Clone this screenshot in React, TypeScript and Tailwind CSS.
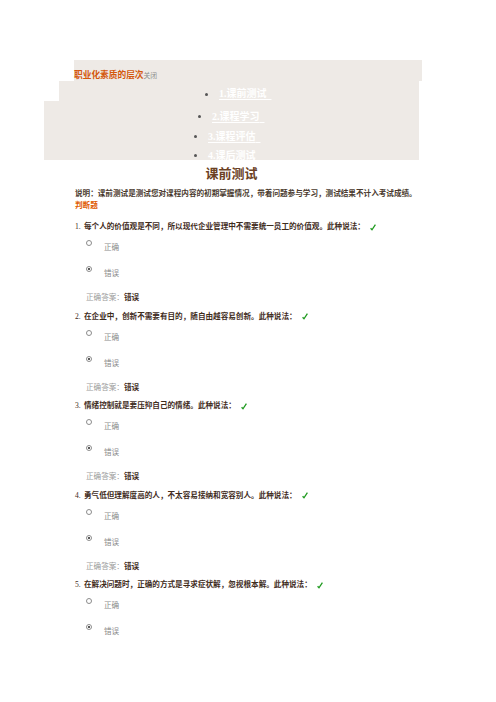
import React from "react";

const CJK = { fontFamily: '"Liberation Serif", "Noto Sans CJK SC", serif' };

function Radio({ checked }: { checked?: boolean }) {
  return (
    <span className="relative block w-[6px] h-[6px] rounded-full border border-[#8c8c8c] bg-white">
      {checked && (
        <span className="absolute left-[1px] top-[1px] w-[2px] h-[2px] rounded-full bg-[#222]" />
      )}
    </span>
  );
}

function Check() {
  return (
    <svg width="6" height="7" viewBox="0 0 6 7" className="block">
      <path d="M0.6 4.2 L2 5.8 L5.4 0.6" fill="none" stroke="#1f9a1f" strokeWidth="1.3" />
    </svg>
  );
}

const questions = [
  "每个人的价值观是不同，所以现代企业管理中不需要统一员工的价值观。此种说法：",
  "在企业中，创新不需要有目的，随自由越容易创新。此种说法：",
  "情绪控制就是要压抑自己的情绪。此种说法：",
  "勇气低但理解度高的人，不太容易接纳和宽容别人。此种说法：",
  "在解决问题时，正确的方式是寻求症状解，忽视根本解。此种说法：",
];

function Question({ n, text, last }: { n: number; text: string; last?: boolean }) {
  return (
    <div className={last ? "h-[60px]" : "h-[89.5px]"}>
      <div className="h-[12px] flex items-center text-[7.6px] leading-[12px] text-[#3f2c1c]">
        <span className="w-[9px]">{n}.</span>
        <span className="font-bold">{text}</span>
        <span className="ml-[5px]">
          <Check />
        </span>
      </div>
      <div className="relative h-[26px]">
        <div className="absolute left-[11px] top-[7px]">
          <Radio />
        </div>
        <div className="absolute left-[29px] top-[10px] text-[7.6px] leading-[10px] text-[#8a8a8a]">正确</div>
      </div>
      <div className="relative h-[26px]">
        <div className="absolute left-[11px] top-[7px]">
          <Radio checked />
        </div>
        <div className="absolute left-[29px] top-[10px] text-[7.6px] leading-[10px] text-[#8a8a8a]">错误</div>
      </div>
      {!last && (
        <div className="mt-[8px] h-[10px] flex items-center text-[7.6px] leading-[10px] pl-[11px]">
          <span className="text-[#9a9a9a] w-[38px]">正确答案：</span>
          <span className="font-bold text-[#3f2c1c]">错误</span>
        </div>
      )}
    </div>
  );
}

function NavItem({ label, ml }: { label: string; ml: string }) {
  return (
    <div className={`flex items-center h-[19.5px] ${ml}`}>
      <span className="w-[3px] h-[3px] rounded-full bg-[#555]" />
      <span className="ml-[11px] text-[10px] leading-[19.5px] font-bold text-white underline underline-offset-2 decoration-white">
        {label}&nbsp;&nbsp;
      </span>
    </div>
  );
}

export default function App() {
  return (
    <div className="w-[496px] h-[702px] bg-white overflow-hidden" style={CJK}>
      <div className="pt-[60px]">
        <div className="ml-[74px] w-[348px] h-[21px] bg-[#eeeae6] pt-[10px]">
          <div className="h-[11px] flex items-center leading-[11px]">
            <span className="text-[8.7px] font-bold text-[#d4570c]">职业化素质的层次</span>
            <span className="text-[6.8px] text-[#8a8a8a]">关闭</span>
          </div>
        </div>
        <div className="ml-[59px] w-[360px] h-[20px] bg-[#eeeae6] pt-[7px]">
          <div className="flex items-center h-[12px] ml-[146px]">
            <span className="w-[3px] h-[3px] rounded-full bg-[#555]" />
            <span className="ml-[11px] text-[10px] leading-[12px] font-bold text-white underline underline-offset-2 decoration-white">
              1.课前测试&nbsp;&nbsp;
            </span>
          </div>
        </div>
        <div className="ml-[44px] w-[375px] h-[59px] bg-[#eeeae6] pt-[6px]">
          <NavItem label="2.课程学习" ml="ml-[154px]" />
          <NavItem label="3.课程评估" ml="ml-[150px]" />
          <NavItem label="4.课后测试" ml="ml-[150px]" />
        </div>
        <div className="ml-[44px] w-[375px] h-[28px] text-center text-[13px] leading-[28px] font-bold text-[#6b4124]">
          课前测试
        </div>
        <div className="ml-[75px]">
          <div className="h-[12px] text-[7.6px] leading-[12px] font-bold text-[#4a3a2e] whitespace-nowrap">
            说明：课前测试是测试您对课程内容的初期掌握情况，带着问题参与学习，测试结果不计入考试成绩。
          </div>
          <div className="h-[11px] text-[7.6px] leading-[11px] font-bold text-[#e05a00]">判断题</div>
          <div className="mt-[10px]">
            {questions.map((q, i) => (
              <Question key={i} n={i + 1} text={q} last={i === questions.length - 1} />
            ))}
          </div>
        </div>
      </div>
    </div>
  );
}
